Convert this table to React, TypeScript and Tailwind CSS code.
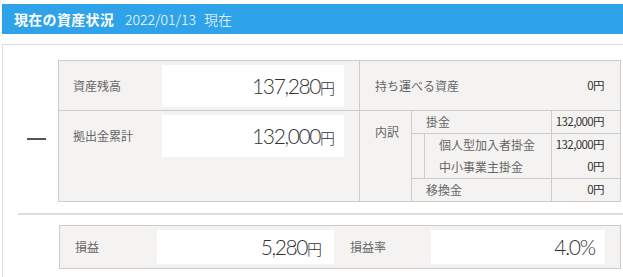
import React from 'react';

const JP = "font-['Noto_Sans_CJK_JP','Noto_Sans',sans-serif]";
const NUM = "font-['Lato','Noto_Sans_CJK_JP',sans-serif]";

interface BreakdownRow {
  label: string;
  value: string;
}

const SUB_ROWS: BreakdownRow[] = [
  { label: '個人型加入者掛金', value: '132,000' },
  { label: '中小事業主掛金', value: '0' },
];

const Yen: React.FC<{ value: string; big?: boolean }> = ({ value, big }) =>
  big ? (
    <span className="text-[#333] whitespace-nowrap">
      <span className={`${NUM} font-light text-[21px] tracking-[-1.4px]`}>{value}</span>
      <span className="text-[15px] font-light">円</span>
    </span>
  ) : (
    <span className="text-[11.5px] text-[#333] tracking-[-0.6px] whitespace-nowrap">{value}円</span>
  );

export default function App() {
  return (
    <div className={`${JP} pl-0.5 pt-1 h-[277px] overflow-hidden bg-white`}>
      {/* Title bar */}
      <div className="h-[30px] bg-[#2ea3ea] flex items-center pl-3 text-white">
        <span className="text-[14px] font-bold tracking-[0.3px]">現在の資産状況</span>
        <span className="ml-[11px] text-[14px] font-light">2022/01/13</span>
        <span className="ml-[8px] text-[14px] font-light">現在</span>
      </div>

      <div className="mt-[10px] border-l border-t border-[#ddd] h-[240px] pt-[15px]">
        {/* Upper block */}
        <div className="flex">
          <div className="w-[55px] pl-6 pt-[78px] shrink-0">
            <div className="w-[19px] h-[2px] bg-[#555]" />
          </div>
          <div className="w-[563px] border border-[#ccc] bg-[#f4f3f1] flex text-[12px] text-[#666]">
            {/* Left side */}
            <div className="w-[300px] flex flex-col">
              <div className="h-[50px] flex items-start pt-1 border-b border-[#ccc]">
                <div className="w-[103px] pl-[14px] h-[42px] flex items-center">資産残高</div>
                <div className="w-[182px] h-[42px] bg-white flex items-center justify-end pr-[9px]">
                  <Yen value="137,280" big />
                </div>
              </div>
              <div className="h-[90px] flex items-start pt-1">
                <div className="w-[103px] pl-[14px] h-[42px] flex items-center">拠出金累計</div>
                <div className="w-[182px] h-[42px] bg-white flex items-center justify-end pr-[9px]">
                  <Yen value="132,000" big />
                </div>
              </div>
            </div>

            {/* Right side */}
            <div className="flex-1 border-l border-[#ccc] flex flex-col">
              <div className="h-[50px] flex items-center justify-between pl-[15px] pr-4 border-b border-[#ccc]">
                <span>持ち運べる資産</span>
                <Yen value="0" />
              </div>
              <div className="h-[90px] flex">
                <div className="w-[52px] pl-[15px] pt-[12px] border-r border-[#ccc]">内訳</div>
                <div className="flex-1 flex flex-col">
                  <div className="h-[23px] flex border-b border-[#ccc]">
                    <div className="w-[140px] pl-[14px] flex items-center border-r border-[#ccc]">掛金</div>
                    <div className="flex-1 flex items-center justify-end pr-4"><Yen value="132,000" /></div>
                  </div>
                  <div className="flex border-b border-[#ccc]">
                    <div className="w-[12px]" />
                    <div className="flex-1 flex flex-col border-l border-[#ccc]">
                      {SUB_ROWS.map((row) => (
                        <div key={row.label} className="h-[22px] flex">
                          <div className="w-[127px] pl-[14px] flex items-center border-r border-[#ccc]">{row.label}</div>
                          <div className="flex-1 flex items-center justify-end pr-4"><Yen value={row.value} /></div>
                        </div>
                      ))}
                    </div>
                  </div>
                  <div className="flex-1 flex">
                    <div className="w-[140px] pl-[14px] flex items-center border-r border-[#ccc]">移換金</div>
                    <div className="flex-1 flex items-center justify-end pr-4"><Yen value="0" /></div>
                  </div>
                </div>
              </div>
            </div>
          </div>
        </div>

        {/* Divider */}
        <div className="ml-[15px] mt-[11px] h-[2px] bg-[#ddd]" />

        {/* Profit block */}
        <div className="ml-[56px] mt-[10px] w-[562px] h-[44px] border border-[#ccc] bg-[#f4f3f1] flex items-center text-[12px] text-[#666]">
          <div className="w-[97px] pl-[15px]">損益</div>
          <div className="w-[177px] h-[34px] bg-white flex items-center justify-end pr-[12px]">
            <Yen value="5,280" big />
          </div>
          <div className="w-[97px] pl-[16px]">損益率</div>
          <div className="w-[174px] h-[34px] bg-white flex items-center justify-end pr-[10px]">
            <span className={`${NUM} text-[21px] font-light text-[#333] tracking-[-1.2px]`}>4.0%</span>
          </div>
        </div>
      </div>
    </div>
  );
}
